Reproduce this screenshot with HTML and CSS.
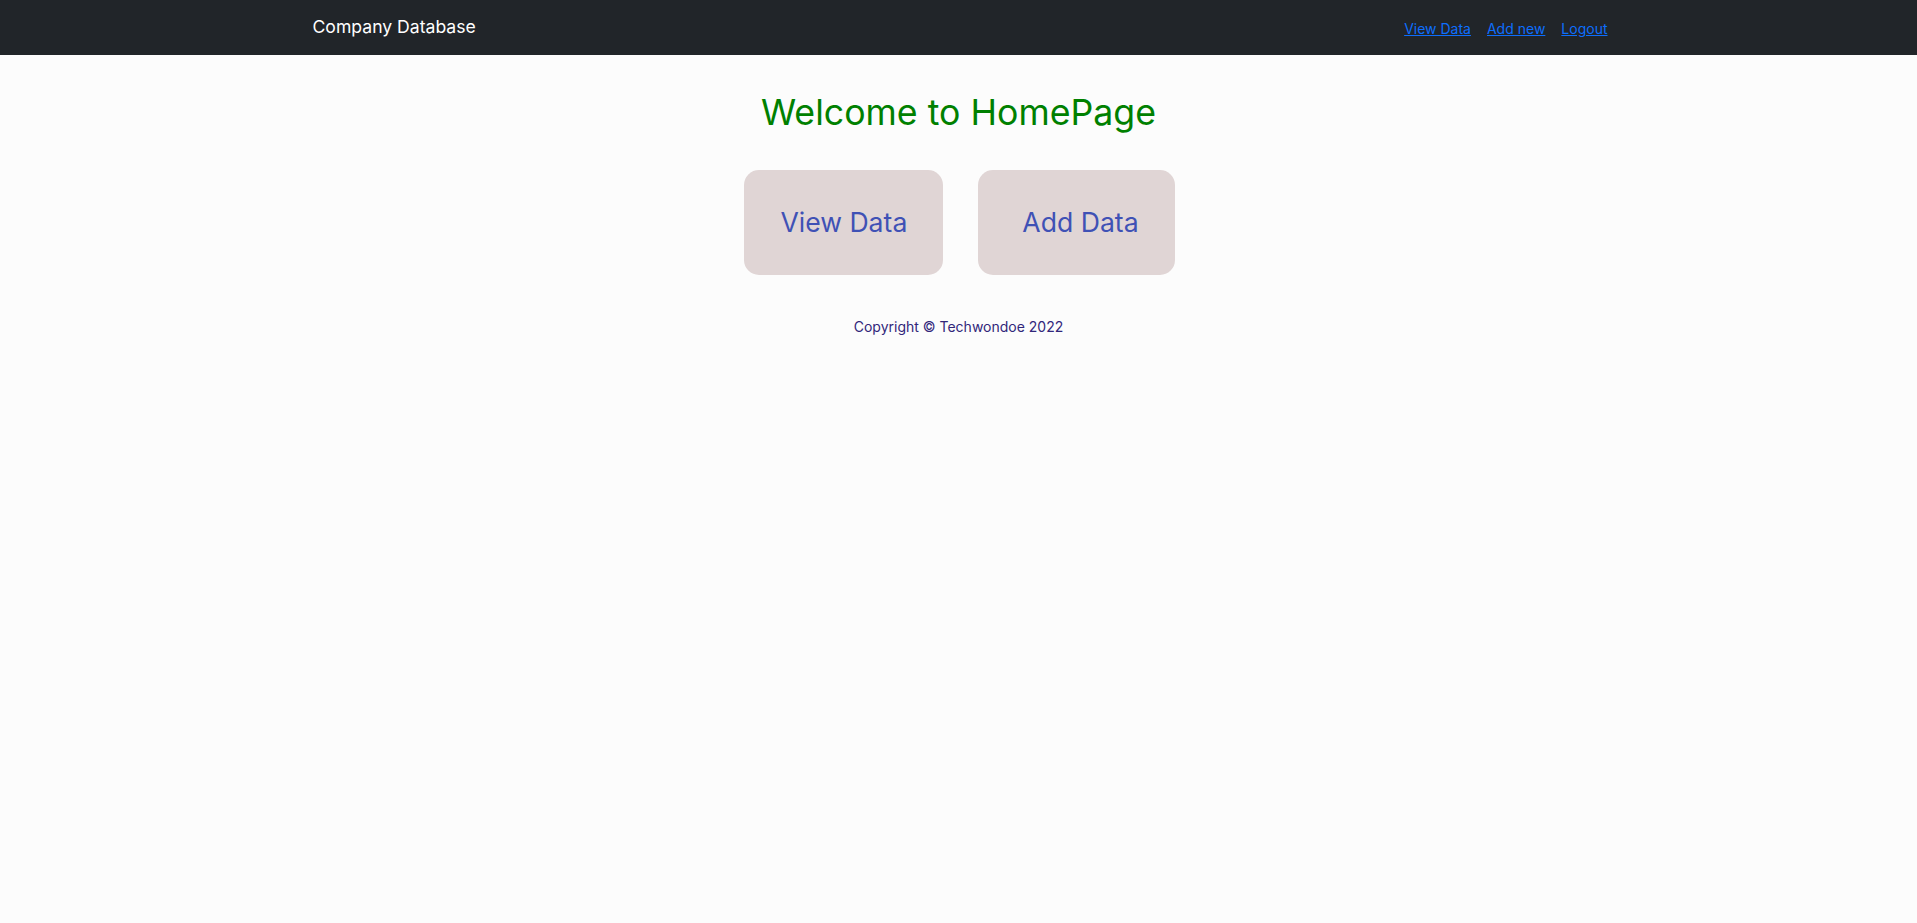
FILE: index.html
```html
<!DOCTYPE html>
<html lang="en">
<head>
<meta charset="utf-8">
<title>Company Database</title>
<link rel="stylesheet" href="styles.css">
</head>
<body>
<nav class="navbar">
  <div class="container nav-inner">
    <a class="brand" href="#">Company Database</a>
    <div class="nav-links">
      <a href="#">View Data</a>
      <a href="#">Add new</a>
      <a href="#">Logout</a>
    </div>
  </div>
</nav>
<main class="main">
  <h1 class="title">Welcome to HomePage</h1>
  <div class="actions">
    <a class="action" href="#">View Data</a>
    <a class="action action-add" href="#">Add Data</a>
  </div>
  <p class="copyright">Copyright © Techwondoe 2022</p>
</main>
</body>
</html>
```

FILE: styles.css
```css
* { box-sizing: border-box; }
html, body {
  margin: 0;
  padding: 0;
}
body {
  background: #fcfcfc;
  font-family: Inter, "Liberation Sans", sans-serif;
  color: #212529;
}
.navbar {
  background: #212529;
  height: 55px;
}
.container {
  max-width: 1320px;
  margin: 0 auto;
  padding: 0 12px;
}
.nav-inner {
  height: 100%;
  display: flex;
  align-items: center;
  justify-content: space-between;
}
.brand {
  color: #fff;
  text-decoration: none;
  font-size: 17.6px;
  line-height: 30px;
  padding-left: 2px;
  margin-top: -2px;
}
.nav-links {
  display: flex;
  gap: 16px;
  margin-top: 2px;
  margin-right: -1px;
}
.nav-links a {
  color: #0d6efd;
  font-size: 14px;
  text-decoration: underline;
}
.main {
  display: flex;
  flex-direction: column;
  align-items: center;
}
.title {
  color: #008000;
  font-weight: 400;
  font-size: 35.7px;
  line-height: 43px;
  margin: 36px 0 0;
}
.actions {
  display: flex;
  gap: 35px;
  margin-top: 36px;
  margin-left: 2px;
}
.action {
  background: #e0d5d5;
  color: #3f51b5;
  text-decoration: none;
  font-size: 26.6px;
  line-height: 33px;
  padding: 36px 36px;
  border-radius: 15px;
}
.action-add {
  padding-left: 44px;
}
.copyright {
  margin: 43px 0 0;
  font-size: 14px;
  color: #31267a;
}
```
